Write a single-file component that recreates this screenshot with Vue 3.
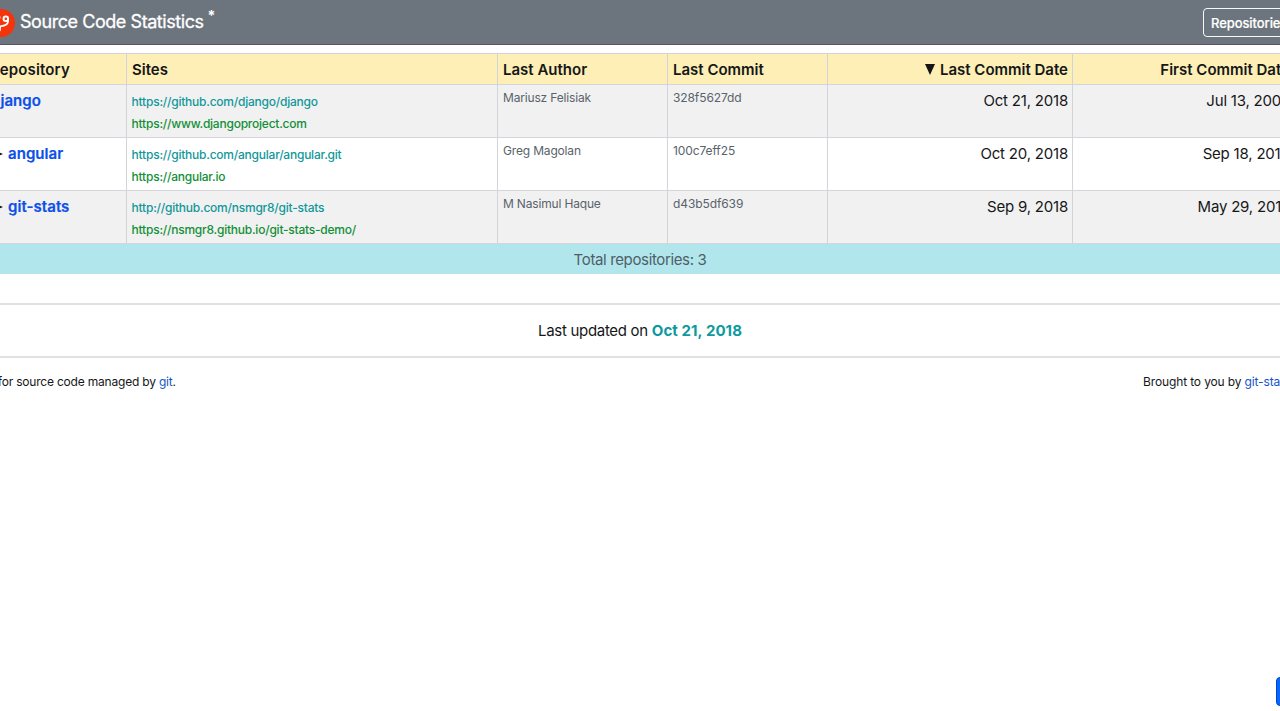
<script setup>
const rows = [
  { name: 'django', repo: 'https://github.com/django/django', site: 'https://www.djangoproject.com', author: 'Mariusz Felisiak', commit: '328f5627dd', last: 'Oct 21, 2018', first: 'Jul 13, 2005' },
  { name: 'angular', repo: 'https://github.com/angular/angular.git', site: 'https://angular.io', author: 'Greg Magolan', commit: '100c7eff25', last: 'Oct 20, 2018', first: 'Sep 18, 2014' },
  { name: 'git-stats', repo: 'http://github.com/nsmgr8/git-stats', site: 'https://nsmgr8.github.io/git-stats-demo/', author: 'M Nasimul Haque', commit: 'd43b5df639', last: 'Sep 9, 2018', first: 'May 29, 2015' },
]
</script>

<template>
  <div class="viewport">
    <div class="page">
      <header class="navbar">
        <svg class="logo" viewBox="0 0 28 28" width="28" height="28">
          <circle cx="14" cy="14" r="14" fill="#f4350b" />
          <g fill="none" stroke="#fff" stroke-width="1.9" stroke-linecap="round">
            <circle cx="18.8" cy="9.8" r="2.3" />
            <circle cx="10.5" cy="8.5" r="2" />
            <circle cx="11" cy="20" r="2" />
            <path d="M21 10.5c.4 3.700-1.800 5.700-4.600 6.200-1.700.3-3.200.1-3.700 1.700M10.600 10.500c-.2 3 .2 5 .4 7.500" />
          </g>
        </svg>
        <span class="brand">Source Code Statistics</span>
        <sup class="star">*</sup>
        <button class="nav-button">Repositories</button>
      </header>

      <main class="table">
        <div class="row head">
          <div class="cell name">Repository</div>
          <div class="cell">Sites</div>
          <div class="cell">Last Author</div>
          <div class="cell">Last Commit</div>
          <div class="cell right">
            <svg class="sort" width="10" height="11" viewBox="0 0 10 11"><path d="M0 0h10L5 11z" fill="#151515" /></svg>
            <span>Last Commit Date</span>
          </div>
          <div class="cell right">First Commit Date</div>
        </div>
        <div v-for="r in rows" :key="r.name" class="row body">
          <div class="cell name">
            <svg class="marker" width="9" height="8" viewBox="0 0 9 8"><path d="M0 0l9 4-9 4z" fill="#111" /></svg>
            <a class="repo-name">{{ r.name }}</a>
          </div>
          <div class="cell sites"><a class="source">{{ r.repo }}</a><a class="site">{{ r.site }}</a></div>
          <div class="cell small">{{ r.author }}</div>
          <div class="cell small hash">{{ r.commit }}</div>
          <div class="cell right date">{{ r.last }}</div>
          <div class="cell right date">{{ r.first }}</div>
        </div>
        <div class="total">Total repositories: 3</div>
      </main>

      <section class="updated"><span>Last updated on <b>Oct 21, 2018</b></span></section>

      <footer class="footer">
        <span class="about">Statistics for source code managed by <a>git</a>.</span>
        <span class="credit">Brought to you by <a>git-stats</a></span>
      </footer>
    </div>
    <button class="fab" aria-label="Top"></button>
  </div>
</template>

<style>
html, body { margin: 0; overflow: hidden; }
</style>

<style scoped>
.viewport { position: relative; width: 1280px; height: 711px; overflow: hidden; background: #fff; color: #151719; font: 15px/22px Inter, "Noto Sans", sans-serif; }
.page { width: 1360px; margin-left: -40px; }
.navbar { box-sizing: border-box; height: 45px; display: flex; align-items: center; padding: 0 13px 0 27px; background: #6c757d; border-bottom: 1px solid #55566a; color: #fff; }
.logo { flex: none; margin-top: 1px; }
.brand { margin-left: 5px; font-size: 18px; letter-spacing: -.44px; white-space: nowrap; -webkit-text-stroke: .3px #fff; }
.star { margin: -13px 0 0 4px; font-size: 14px; line-height: 14px; font-weight: 700; }
.nav-button { box-sizing: border-box; flex: none; width: 104px; height: 29px; margin-left: auto; padding: 2px 0 0 7px; border: 1px solid #f8f9fa; border-radius: 4px; background: transparent; color: #fff; font: 500 13px/25px Inter, sans-serif; letter-spacing: -.08px; text-align: left; -webkit-text-stroke: .2px #fff; }
.table { margin-top: 8px; border-top: 1px solid #d5d2df; }
.row { display: grid; grid-template-columns: 167px 371px 170px 160px 245px 247px; box-sizing: border-box; border-bottom: 1px solid #d6d6da; }
.head { height: 31px; background: #fdefb6; font-weight: 600; line-height: 31px; }
.body { height: 53px; background: #fff; }
.body:nth-child(even) { background: #f1f1f1; }
.cell { box-sizing: border-box; min-width: 0; padding: 0 5px; border-right: 1px solid #d3d3dc; white-space: nowrap; }
.head .name { padding-left: 30px; letter-spacing: .15px; }
.cell.right { padding-right: 4px; text-align: right; }
.cell.right:last-child { margin-right: 24px; padding-right: 6px; border: 0; }
.sort { margin-right: 5px; }
.body .name { display: flex; align-items: center; height: 52px; padding: 0 5px 20px 34px; }
.body:nth-child(2) .name { padding-left: 17px; }
.marker { flex: none; margin-right: 5px; }
.repo-name { color: #0d4fe8; font-weight: 600; letter-spacing: .05px; -webkit-text-stroke: .2px #0d4fe8; }
.sites { display: flex; flex-direction: column; padding: 6px 4px 0 4.6px; font-size: 12px; font-weight: 500; letter-spacing: -.23px; }
.source { color: #12979b; }
.site { color: #118f38; }
.small { padding-top: 2px; color: #59636b; font-size: 12px; letter-spacing: -.17px; }
.hash { letter-spacing: -.1px; }
.date { padding-top: 5px; letter-spacing: -.2px; }
.total { height: 30px; background: #b2e6ed; color: #4e5f65; line-height: 31px; letter-spacing: -.36px; text-align: center; }
.updated { box-sizing: border-box; height: 55px; margin-top: 29px; border: solid #e1e1e1; border-width: 2px 0; line-height: 51px; text-align: center; letter-spacing: -.3px; }
.updated b { color: #0c9aa0; font-weight: 700; letter-spacing: .08px; }
.footer { display: flex; justify-content: space-between; padding: 13px 30px 0 0; font-size: 12px; letter-spacing: -.14px; }
.about { margin-left: -15px; letter-spacing: -.2px; }
.footer a { color: #1653ca; }
.fab { position: absolute; left: 1276px; top: 677px; width: 42px; height: 29px; border: 1px solid #0645c4; border-radius: 4px; background: #0667ff; }
</style>
